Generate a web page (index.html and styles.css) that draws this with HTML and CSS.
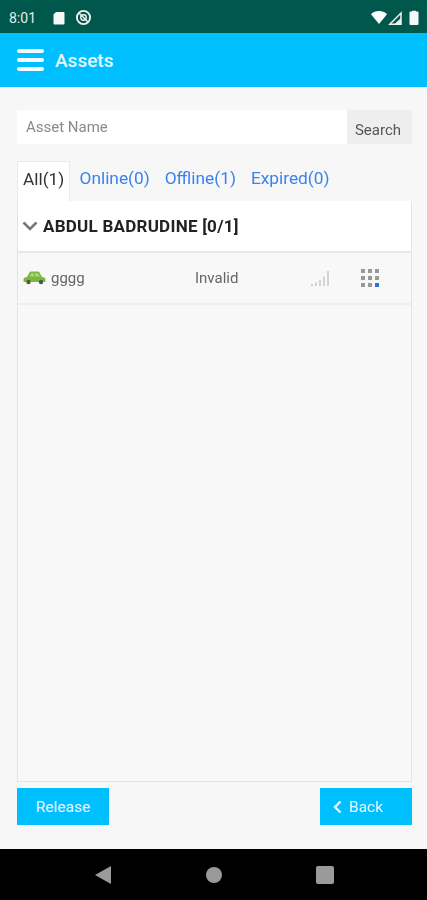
FILE: index.html
```html
<!DOCTYPE html>
<html lang="en">
<head>
  <meta charset="UTF-8" />
  <meta name="viewport" content="width=device-width, initial-scale=1.0" />
  <title>Assets</title>
  <link rel="stylesheet" href="styles.css">
</head>
<body>
  <div class="phone">
    <div class="status-bar">
      <span class="clock">8:01</span>
      <svg class="status-icon" width="12" height="14" viewBox="0 0 12 14"><path fill="#f4f8f6" d="M3 1h7.500a1 1 0 0 1 1 1v10.500a1 1 0 0 1-1 1h-9a1 1 0 0 1-1-1V3.500z"/></svg>
      <svg class="status-icon" width="17" height="17" viewBox="0 0 16 16"><circle cx="8" cy="8" r="6.200" fill="none" stroke="#eef4f1" stroke-width="1.800"/><circle cx="8" cy="8" r="2.600" fill="none" stroke="#eef4f1" stroke-width="1.300"/><path d="M3.500 3.500l9 9" stroke="#eef4f1" stroke-width="1.300"/></svg>
      <span class="status-right">
        <svg class="wifi" width="16" height="13" viewBox="0 0 16 13"><path fill="#fff" d="M0 3.200C2 1.200 5 0 8 0s6 1.200 8 3.200L8 13z"/></svg>
        <svg class="cell" width="14" height="14" viewBox="0 0 14 14"><path fill="none" stroke="#eef4f1" stroke-width="1.500" d="M1.800 13.200L13 2v11.200z"/><path fill="#eef4f1" d="M6 13.500L13 7v6.500z"/></svg>
        <svg width="10" height="15" viewBox="0 0 10 15"><path fill="#f4f8f6" d="M3 1.500V.8h4v.7h1.500a1 1 0 0 1 1 1V14a1 1 0 0 1-1 1h-7a1 1 0 0 1-1-1V2.500a1 1 0 0 1 1-1z"/></svg>
      </span>
    </div>

    <header class="app-bar">
      <div class="hamburger"><i></i><i></i><i></i></div>
      <h1>Assets</h1>
    </header>

    <main class="content">
      <form class="search">
        <input type="text" placeholder="Asset Name">
        <button type="button">Search</button>
      </form>

      <ul class="tabs">
        <li class="active">All(1)</li>
        <li>Online(0)</li>
        <li>Offline(1)</li>
        <li>Expired(0)</li>
      </ul>

      <section class="panel">
        <div class="group-head">
          <svg width="16" height="10" viewBox="0 0 16 10"><path d="M1.500 1.500L8 8l6.500-6.500" fill="none" stroke="#777" stroke-width="2.600"/></svg>
          <span>ABDUL BADRUDINE [0/1]</span>
        </div>
        <div class="asset-row">
          <span class="asset-name">
            <svg width="23" height="14" viewBox="0 0 23 14">
              <path fill="#7cb83f" d="M.500 8.500c0-1.500 1-2.200 3.500-2.500L6.500 1.500C7 .7 7.500.5 8.500.5h6c1 0 1.500.3 2 1L19 6c2 .3 3.500 1 3.500 2.500v1.700c0 .6-.4.8-1 .8h-20c-.6 0-1-.2-1-.8z"/>
              <path fill="#a9d47c" d="M8.500 2.200h2.500V5.500H6.500zM12 2.200h3l2 3.300h-5z"/>
              <circle cx="5.500" cy="11" r="2.200" fill="#4d5c48"/><circle cx="18" cy="11" r="2.200" fill="#4d5c48"/>
            </svg>
            <span>gggg</span>
          </span>
          <span class="asset-state">Invalid</span>
          <svg class="signal" width="18" height="15" viewBox="0 0 18 15">
            <path fill="#d4d4d4" d="M0 13h2v2H0zM4 11.500h2V15H4zM8 9h2v6H8zM12 5.500h2V15h-2zM16 0h2v15h-2z"/>
          </svg>
          <div class="dots">
            <i></i><i></i><i></i><i></i><i></i><i></i><i></i><i></i><i class="on"></i>
          </div>
        </div>
      </section>

      <div class="actions">
        <button type="button" class="btn">Release</button>
        <button type="button" class="btn btn-back">
          <svg width="9" height="14" viewBox="0 0 9 14"><path d="M7.500 1.500L2 7l5.500 5.500" fill="none" stroke="#e8f8ff" stroke-width="2.400"/></svg>
          Back
        </button>
      </div>
    </main>

    <nav class="nav-bar">
      <svg width="16" height="18" viewBox="0 0 16 18"><path fill="#9a9a9a" d="M16 0v18L0 9z"/></svg>
      <svg width="16" height="16" viewBox="0 0 16 16"><circle cx="8" cy="8" r="8" fill="#9a9a9a"/></svg>
      <svg width="18" height="18" viewBox="0 0 18 18"><rect width="18" height="18" rx="2" fill="#9a9a9a"/></svg>
    </nav>
  </div>
</body>
</html>
```

FILE: styles.css
```css
* { box-sizing: border-box; margin: 0; padding: 0; }
body { font-family: 'Roboto', sans-serif; background: #f7f7f7; }
/* the source capture is soft, so the whole screen gets a slight blur */
.phone { width: 427px; height: 900px; display: flex; flex-direction: column; overflow: hidden; filter: blur(0.5px); }

.status-bar {
  height: 33px; background: #00574b; color: #e6eeeb;
  display: flex; align-items: center; padding: 2px 8px 0 9px;
  font-size: 14px;
}
.clock { width: 44px; }
.status-icon { margin-right: 10px; }
.status-right { margin-left: auto; display: flex; align-items: center; }
.wifi { margin-right: 1px; }
.cell { margin-right: 7px; }

.app-bar {
  height: 54px; background: #00bfff; color: #e8f8ff;
  display: flex; align-items: center; padding: 0 17px;
}
.hamburger { width: 27px; display: flex; flex-direction: column; gap: 5px; margin-right: 11px; }
.hamburger i { display: block; height: 4px; border-radius: 2px; background: #f2fbff; }
.app-bar h1 { font-size: 19px; font-weight: 500; }

.content { flex: 1; padding: 23px 15px 24px 17px; display: flex; flex-direction: column; }

.search { display: flex; height: 34px; }
.search input {
  flex: 1; min-width: 0; border: none; background: #fff; outline: none;
  padding: 0 9px 1px; font: 15px 'Roboto', sans-serif; color: #777;
}
.search input::placeholder { color: #8a8a8a; }
.search button {
  width: 65px; border: none; background: #eeeeee; color: #555;
  font: 15px 'Roboto', sans-serif; padding: 5px 3px 0 0;
}

.tabs { list-style: none; display: flex; margin-top: 17px; height: 40px; font-size: 17.300px; color: #3b82f0; }
.tabs li { padding: 7px 7.500px 0; white-space: nowrap; }
.tabs .active {
  width: 53px; padding-left: 5px; padding-right: 0; margin-right: 2px; color: #333; background: #fff;
  border: 1px solid #eaeaea; border-bottom: none;
}

.panel { flex: 1; border: 1px solid #e4e4e4; border-top: none; background: #f8f8f8; }
.group-head {
  height: 52px; background: #fff; border-bottom: 2px solid #e8e8e8;
  display: flex; align-items: center; gap: 5px; padding: 0 4px 1px 4px;
  font-size: 17px; font-weight: 700; color: #222; letter-spacing: 0.250px;
}
.asset-row {
  height: 52px; border-bottom: 2px solid #eeeeee;
  display: flex; align-items: center; font-size: 15px; color: #666;
}
.asset-name { width: 177px; display: flex; align-items: center; gap: 5px; padding-left: 5px; }
.asset-state { width: 116px; }
.signal { margin-right: 32px; }
.dots { display: grid; grid-template-columns: repeat(3, 4px); gap: 3px; }
.dots i { width: 4px; height: 4px; background: #999; }
.dots .on { background: #2f6fd8; }

.actions { display: flex; justify-content: space-between; margin-top: 6px; }
.btn {
  width: 92px; height: 37px; border: none; background: #00bfff; color: #e8f8ff;
  font: 15.500px 'Roboto', sans-serif;
}
.btn-back { display: flex; align-items: center; justify-content: flex-start; gap: 7px; padding-left: 13px; }

.nav-bar {
  height: 51px; background: #000; display: flex; align-items: center;
  padding-left: 95px; gap: 94.500px;
}
```
